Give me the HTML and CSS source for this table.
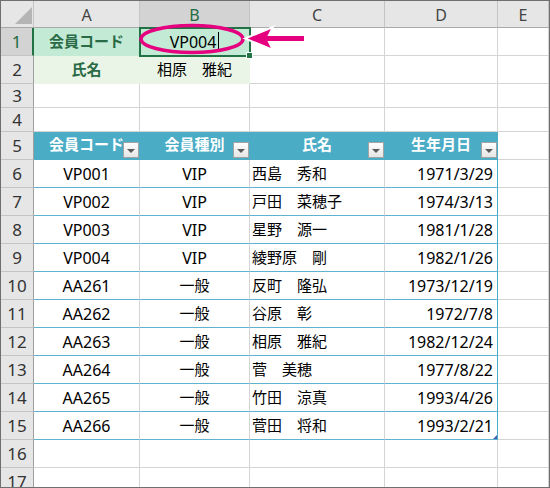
FILE: index.html
```html
<!DOCTYPE html>
<html lang="ja">
<head>
<meta charset="utf-8">
<link rel="stylesheet" href="styles.css">
</head>
<body>
<div class="sheet">
  <div class="c ch corner"></div>
  <div class="c ch">A</div>
  <div class="c ch selc">B</div>
  <div class="c ch">C</div>
  <div class="c ch">D</div>
  <div class="c ch">E</div>

  <div class="c rh selr">1</div>
  <div class="c g1 lbl">会員コード</div>
  <div class="c g1 ctr n">VP004<span class="caret"></span></div>
  <div class="c"></div>
  <div class="c"></div>
  <div class="c"></div>

  <div class="c rh">2</div>
  <div class="c g2 lbl">氏名</div>
  <div class="c g2 ctr">相原　雅紀</div>
  <div class="c"></div>
  <div class="c"></div>
  <div class="c"></div>

  <div class="c rh">3</div>
  <div class="c"></div><div class="c"></div><div class="c"></div><div class="c"></div><div class="c"></div>

  <div class="c rh">4</div>
  <div class="c"></div><div class="c"></div><div class="c"></div><div class="c"></div><div class="c"></div>

  <div class="c rh">5</div>
  <div class="c th">会員コード<span class="filter"></span></div>
  <div class="c th">会員種別<span class="filter"></span></div>
  <div class="c th">氏名<span class="filter"></span></div>
  <div class="c th">生年月日<span class="filter"></span></div>
  <div class="c"></div>

  <div class="c rh">6</div>
  <div class="c td ctr n">VP001</div><div class="c td ctr n">VIP</div><div class="c td lft">西島　秀和</div><div class="c td rgt n last">1971/3/29</div><div class="c"></div>
  <div class="c rh">7</div>
  <div class="c td ctr n">VP002</div><div class="c td ctr n">VIP</div><div class="c td lft">戸田　菜穂子</div><div class="c td rgt n last">1974/3/13</div><div class="c"></div>
  <div class="c rh">8</div>
  <div class="c td ctr n">VP003</div><div class="c td ctr n">VIP</div><div class="c td lft">星野　源一</div><div class="c td rgt n last">1981/1/28</div><div class="c"></div>
  <div class="c rh">9</div>
  <div class="c td ctr n">VP004</div><div class="c td ctr n">VIP</div><div class="c td lft">綾野原　剛</div><div class="c td rgt n last">1982/1/26</div><div class="c"></div>
  <div class="c rh">10</div>
  <div class="c td ctr n">AA261</div><div class="c td ctr">一般</div><div class="c td lft">反町　隆弘</div><div class="c td rgt n last">1973/12/19</div><div class="c"></div>
  <div class="c rh">11</div>
  <div class="c td ctr n">AA262</div><div class="c td ctr">一般</div><div class="c td lft">谷原　彰</div><div class="c td rgt n last">1972/7/8</div><div class="c"></div>
  <div class="c rh">12</div>
  <div class="c td ctr n">AA263</div><div class="c td ctr">一般</div><div class="c td lft">相原　雅紀</div><div class="c td rgt n last">1982/12/24</div><div class="c"></div>
  <div class="c rh">13</div>
  <div class="c td ctr n">AA264</div><div class="c td ctr">一般</div><div class="c td lft">菅　美穂</div><div class="c td rgt n last">1977/8/22</div><div class="c"></div>
  <div class="c rh">14</div>
  <div class="c td ctr n">AA265</div><div class="c td ctr">一般</div><div class="c td lft">竹田　涼真</div><div class="c td rgt n last">1993/4/26</div><div class="c"></div>
  <div class="c rh">15</div>
  <div class="c td ctr n">AA266</div><div class="c td ctr">一般</div><div class="c td lft">菅田　将和</div><div class="c td rgt n last end">1993/2/21</div><div class="c"></div>

  <div class="c rh">16</div>
  <div class="c"></div><div class="c"></div><div class="c"></div><div class="c"></div><div class="c"></div>
  <div class="c rh">17</div>
  <div class="c"></div><div class="c"></div><div class="c"></div><div class="c"></div><div class="c"></div>

  <div class="selbox"><span class="handle"></span></div>

  <svg class="marks" width="550" height="488" viewBox="0 0 550 488">
    <ellipse cx="192" cy="39" rx="51" ry="13.5" fill="none" stroke="#e4007f" stroke-width="3.5"/>
    <path d="M245 38.5 L273 27 L269 35 L305 35 L305 42 L269 42 L273 50 Z" fill="#e4007f" stroke="#ffffff" stroke-width="2" stroke-linejoin="miter"/>
  </svg>
</div>
</body>
</html>
```

FILE: styles.css
```css
html, body {
  margin: 0;
  padding: 0;
  background: #ffffff;
}

.sheet {
  position: relative;
  width: 550px;
  height: 488px;
  box-sizing: border-box;
  border: 1px solid #6f6f6f;
  overflow: hidden;
  display: grid;
  grid-template-columns: 33px 106px 110px 135px 113px 51px;
  grid-template-rows: 27px 28px 28px 24px 24px repeat(13, 28px);
  font-family: "Noto Sans", "Noto Sans CJK JP", sans-serif;
  font-size: 15px;
  color: #000;
}

.c {
  box-sizing: border-box;
  border-right: 1px solid #d4d4d4;
  border-bottom: 1px solid #d4d4d4;
  display: flex;
  align-items: center;
  white-space: nowrap;
  overflow: hidden;
  position: relative;
  line-height: 1;
}

.ch {
  background: #e6e6e6;
  border-right-color: #c4c4c4;
  border-bottom-color: #a9a9a9;
  justify-content: center;
  color: #444;
  font-size: 16px;
  padding-top: 1px;
}

.corner {
  justify-content: flex-end;
  align-items: flex-end;
  padding: 0 1px 3px 0;
}

.corner::after {
  content: "";
  width: 17px;
  height: 17px;
  background: #b5b5b5;
  clip-path: polygon(100% 0, 100% 100%, 0 100%);
}

.selc {
  background: #d3d3d3;
  color: #1f6a3f;
}

.rh {
  background: #e6e6e6;
  border-right-color: #9f9f9f;
  border-bottom-color: #c4c4c4;
  justify-content: center;
  color: #333;
  font-size: 17px;
}

.selr {
  background: #d3d3d3;
  color: #1f6a3f;
  border-right: 2px solid #217346;
}

.g1 {
  background: #c3ead5;
  border-color: #c3ead5;
}

.g2 {
  background: #ebf5e7;
  border-color: #ebf5e7;
}

.lbl {
  justify-content: center;
  font-weight: bold;
  color: #2a6b47;
}

.ctr { justify-content: center; }
.lft { justify-content: flex-start; padding-left: 2px; }
.rgt { justify-content: flex-end; padding-right: 4px; }

.n { font-size: 16px; }

.caret {
  display: inline-block;
  width: 1px;
  height: 19px;
  background: #000;
  margin-left: 2px;
}

.th {
  background: #4bacc6;
  border-right-color: #4bacc6;
  border-bottom-color: #4bacc6;
  color: #fff;
  font-weight: bold;
  justify-content: center;
  padding-bottom: 2px;
}

.filter {
  position: absolute;
  right: 0;
  bottom: 1px;
  width: 16px;
  height: 16px;
  box-sizing: border-box;
  border: 1px solid #a3a3a3;
  background: linear-gradient(#fdfdfd, #e6e6e6);
  display: flex;
  align-items: center;
  justify-content: center;
}

.filter::after {
  content: "";
  border-left: 4px solid transparent;
  border-right: 4px solid transparent;
  border-top: 4px solid #5a5a5a;
  margin-top: 1px;
}

.td {
  border-bottom-color: #5fb2d0;
}

.last {
  border-right-color: #4bacc6;
}

.end::after {
  content: "";
  position: absolute;
  right: 0;
  bottom: 0;
  width: 4px;
  height: 4px;
  background: #3f5fae;
  clip-path: polygon(100% 0, 100% 100%, 0 100%);
}

.selbox {
  position: absolute;
  left: 138px;
  top: 26px;
  width: 112px;
  height: 30px;
  box-sizing: border-box;
  border: 2px solid #217346;
  pointer-events: none;
}

.handle {
  position: absolute;
  right: -4px;
  bottom: -4px;
  width: 5px;
  height: 5px;
  background: #217346;
  border: 1px solid #fff;
}

.marks {
  position: absolute;
  left: -1px;
  top: -1px;
  pointer-events: none;
}
```
